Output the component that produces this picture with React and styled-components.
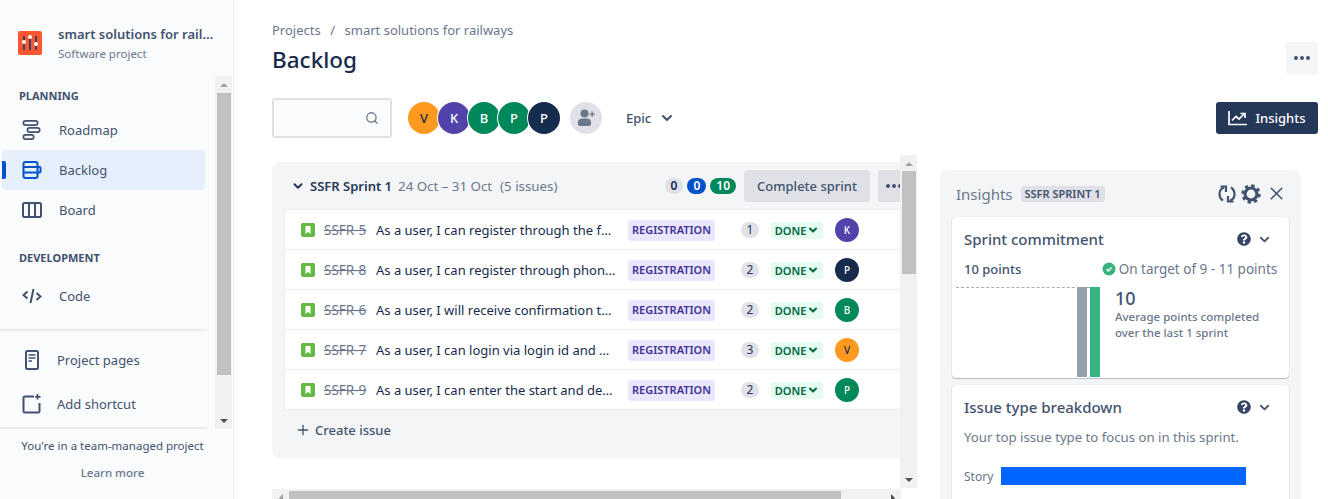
import React from 'react';
import styled, { createGlobalStyle } from 'styled-components';
import { FaQuestionCircle } from 'react-icons/fa';
import { FiChevronDown, FiSearch, FiX, FiPlus } from 'react-icons/fi';

const Global = createGlobalStyle`
  html, body { margin: 0; padding: 0; height: 499px; overflow: hidden; background: #fff; }
  body { font-family: "Noto Sans", sans-serif; color: #172B4D; font-size: 14px; }
  * { box-sizing: border-box; }
`;

const issues = [
  { key: 'SSFR-5', text: 'As a user, I can register through the form on the website', est: 1, who: 'K' },
  { key: 'SSFR-8', text: 'As a user, I can register through phone number and otp', est: 2, who: 'N' },
  { key: 'SSFR-6', text: 'As a user, I will receive confirmation through email', est: 2, who: 'B' },
  { key: 'SSFR-7', text: 'As a user, I can login via login id and password', est: 3, who: 'V' },
  { key: 'SSFR-9', text: 'As a user, I can enter the start and destination', est: 2, who: 'P' },
];

const people = {
  V: { label: 'V', bg: '#FF991F', fg: '#172B4D' },
  K: { label: 'K', bg: '#5243AA', fg: '#fff' },
  B: { label: 'B', bg: '#00875A', fg: '#fff' },
  P: { label: 'P', bg: '#00875A', fg: '#fff' },
  N: { label: 'P', bg: '#172B4D', fg: '#fff' },
};

export default function App() {
  return (
    <Page>
      <Global />
      <Sidebar>
        <ProjectHead>
          <ProjectLogo>
            <svg width="24" height="24" viewBox="0 0 24 24">
              <rect width="24" height="24" rx="2" fill="#FF5630" />
              <path d="M6 5v14M12 5v14M18 5v14" stroke="#344563" strokeWidth="2" />
              <circle cx="6" cy="11" r="2" fill="#fff" />
              <circle cx="12" cy="6" r="2" fill="#fff" />
              <circle cx="18" cy="13" r="2" fill="#fff" />
            </svg>
          </ProjectLogo>
          <ProjectText>
            <ProjectName>smart solutions for railways</ProjectName>
            <ProjectType>Software project</ProjectType>
          </ProjectText>
        </ProjectHead>
        <NavScroll>
          <NavContent>
            <NavLabel>PLANNING</NavLabel>
            <NavItem>
              <NavIcon><RoadmapIcon /></NavIcon>
              Roadmap
            </NavItem>
            <NavItem $active>
              <NavIcon><BacklogIcon /></NavIcon>
              Backlog
            </NavItem>
            <NavItem>
              <NavIcon><BoardIcon /></NavIcon>
              Board
            </NavItem>
            <NavLabel $second>DEVELOPMENT</NavLabel>
            <NavItem>
              <NavIcon><CodeIcon /></NavIcon>
              Code
            </NavItem>
            <NavDivider $gap={13} />
            <ExtraItem>
              <NavIcon><PageIcon /></NavIcon>
              Project pages
            </ExtraItem>
            <ExtraItem>
              <NavIcon><ShortcutIcon /></NavIcon>
              Add shortcut
            </ExtraItem>
            <NavDivider $gap={1} />
          </NavContent>
          <VScrollbar $thumbTop={0} $thumbHeight={282} />
        </NavScroll>
        <SideFoot>
          <FootNote>You're in a team-managed project</FootNote>
          <FootLink>Learn more</FootLink>
        </SideFoot>
      </Sidebar>

      <Main>
        <Crumbs>
          <span>Projects</span>
          <CrumbSep>/</CrumbSep>
          <span>smart solutions for railways</span>
        </Crumbs>
        <TitleRow>
          <PageTitle>Backlog</PageTitle>
          <MoreButton><Dots /></MoreButton>
        </TitleRow>
        <Toolbar>
          <SearchBox><FiSearch size={14} color="#6B778C" strokeWidth={2.2} /></SearchBox>
          <AvatarStack>
            {['V', 'K', 'B', 'P', 'N'].map((p) => (
              <StackAvatar key={p} $bg={people[p].bg} $fg={people[p].fg}>{people[p].label}</StackAvatar>
            ))}
          </AvatarStack>
          <AddPerson>
            <svg width="20" height="20" viewBox="0 0 20 20" fill="#6B778C">
              <circle cx="8.5" cy="5.5" r="4" />
              <path d="M2 14.500C2 11.500 4 10.500 6 10.500h5c2 0 4 1 4 4V16c0 1.200-.8 2-2 2H4c-1.200 0-2-.8-2-2z" />
              <path d="M15.5 3.500h1.300v2h2v1.300h-2v2h-1.300v-2h-2V5.500h2z" />
            </svg>
          </AddPerson>
          <EpicFilter>
            Epic
            <FiChevronDown size={16} strokeWidth={3} color="#42526E" />
          </EpicFilter>
          <InsightsButton>
            <svg width="20" height="16" viewBox="0 0 20 16" fill="none" stroke="#fff" strokeWidth="1.7">
              <path d="M1 1v13.500h18" />
              <path d="M4 10.500l4-4 3 2.500 5-5" />
              <path d="M12.5 3.500H17V8" />
            </svg>
            Insights
          </InsightsButton>
        </Toolbar>

        <Workspace>
          <BacklogPane>
            <BacklogRow>
              <BacklogScroll>
                <SprintCard>
                  <SprintHead>
                    <FiChevronDown size={14} strokeWidth={3.5} color="#253858" />
                    <SprintName>SSFR Sprint 1</SprintName>
                    <SprintMeta>24 Oct – 31 Oct</SprintMeta>
                    <SprintMeta $wide>(5 issues)</SprintMeta>
                    <Counts>
                      <Count $bg="#DFE1E6" $fg="#172B4D">0</Count>
                      <Count $bg="#0052CC" $fg="#fff">0</Count>
                      <Count $bg="#00875A" $fg="#fff">10</Count>
                    </Counts>
                    <CompleteButton>Complete sprint</CompleteButton>
                    <SprintMore><Dots /></SprintMore>
                  </SprintHead>
                  <IssueList>
                    {issues.map((i) => (
                      <IssueRow key={i.key}>
                        <StoryIcon />
                        <IssueKey>{i.key}</IssueKey>
                        <IssueText>{i.text}</IssueText>
                        <EpicTag>REGISTRATION</EpicTag>
                        <Estimate>{i.est}</Estimate>
                        <Status>
                          DONE
                          <FiChevronDown size={12} strokeWidth={4} color="#006644" />
                        </Status>
                        <RowAvatar $bg={people[i.who].bg} $fg={people[i.who].fg}>{people[i.who].label}</RowAvatar>
                      </IssueRow>
                    ))}
                  </IssueList>
                  <CreateIssue>
                    <FiPlus size={16} strokeWidth={2} color="#42526E" />
                    Create issue
                  </CreateIssue>
                </SprintCard>
              </BacklogScroll>
              <VScrollbar $thumbTop={-1} $thumbHeight={103} />
            </BacklogRow>
            <HScrollbar>
              <HArrow $dir="left" />
              <HThumb />
              <HArrow $dir="right" />
            </HScrollbar>
          </BacklogPane>

          <InsightsPanel>
            <PanelHead>
              <PanelTitle>Insights</PanelTitle>
              <SprintTag>SSFR SPRINT 1</SprintTag>
              <PanelTools>
                <RefreshIcon />
                <GearIcon />
                <FiX size={21} color="#42526E" strokeWidth={1.8} />
              </PanelTools>
            </PanelHead>
            <InsightCard>
              <CardHead>
                <CardTitle>Sprint commitment</CardTitle>
                <CardTools />
              </CardHead>
              <PointsRow>
                <Points>10 points</Points>
                <OnTarget>
                  <svg width="14" height="14" viewBox="0 0 14 14">
                    <circle cx="7" cy="7" r="6.5" fill="#36B37E" />
                    <path d="M4.500 7.200l1.800 1.700 3.200-3.400" fill="none" stroke="#fff" strokeWidth="1.5" />
                  </svg>
                  On target of 9 - 11 points
                </OnTarget>
              </PointsRow>
              <Chart>
                <Plot>
                  <Bar $color="#97A0AF" />
                  <Bar $color="#36B37E" />
                </Plot>
                <ChartNote>
                  <BigNumber>10</BigNumber>
                  <NoteText>Average points completed over the last 1 sprint</NoteText>
                </ChartNote>
              </Chart>
            </InsightCard>
            <InsightCard $second>
              <CardHead>
                <CardTitle>Issue type breakdown</CardTitle>
                <CardTools />
              </CardHead>
              <CardCopy>Your top issue type to focus on in this sprint.</CardCopy>
              <TypeRow>
                <TypeLabel>Story</TypeLabel>
                <TypeBar style={{ width: 245 }} />
              </TypeRow>
            </InsightCard>
          </InsightsPanel>
        </Workspace>
      </Main>
    </Page>
  );
}

const Dots = () => (
  <svg width="18" height="6" viewBox="0 0 18 6" fill="#42526E">
    <circle cx="3" cy="3" r="2" />
    <circle cx="9" cy="3" r="2" />
    <circle cx="15" cy="3" r="2" />
  </svg>
);

const CardTools = () => (
  <ToolGroup>
    <FaQuestionCircle size={14} color="#344563" />
    <FiChevronDown size={15} strokeWidth={3} color="#42526E" />
  </ToolGroup>
);

const RoadmapIcon = () => (
  <svg width="20" height="22" viewBox="0 0 20 22" fill="none" stroke="currentColor" strokeWidth="1.7">
    <rect x="1.4" y="1.9" width="14.2" height="4.3" rx="2.1" />
    <rect x="5.4" y="8.9" width="12.3" height="4.3" rx="2.1" />
    <rect x="1.4" y="15.900" width="10.300" height="4.300" rx="2.100" />
  </svg>
);

const BacklogIcon = () => (
  <svg width="20" height="20" viewBox="0 0 20 20" fill="none" stroke="currentColor" strokeWidth="2">
    <rect x="1.5" y="2" width="14" height="16" rx="2" />
    <path d="M1.500 7h14M1.500 12.500h14" />
    <path d="M15.500 7h2a1 1 0 0 1 1 1v3.500a1 1 0 0 1-1 1h-2" />
  </svg>
);

const BoardIcon = () => (
  <svg width="20" height="18" viewBox="0 0 20 18" fill="none" stroke="currentColor" strokeWidth="2">
    <rect x="1" y="2" width="18" height="14" rx="1.5" />
    <path d="M7 2v14M13 2v14" />
  </svg>
);

const CodeIcon = () => (
  <svg width="20" height="18" viewBox="0 0 20 18" fill="none" stroke="currentColor" strokeWidth="2">
    <path d="M5.500 4.500L1.500 8l4 3.500M14.500 6l4 3.500-4 3.500M11.500 2l-3 14" />
  </svg>
);

const PageIcon = () => (
  <svg width="14" height="20" viewBox="0 0 14 20" fill="none" stroke="currentColor" strokeWidth="2">
    <rect x="1" y="1" width="12" height="18" rx="1.5" />
    <path d="M3.500 5h7M3.500 8h7M3.500 11h3.500" strokeWidth="1.5" />
  </svg>
);

const ShortcutIcon = () => (
  <svg width="20" height="20" viewBox="0 0 20 20" fill="none" stroke="currentColor" strokeWidth="2">
    <path d="M12 2.500H3c-1 0-1.500.5-1.500 1.500v13c0 1 .5 1.500 1.500 1.500h13c1 0 1.500-.5 1.500-1.500V9" />
    <path d="M15.500 0v5.500M13 2.800h5.500" strokeWidth="1.7" />
  </svg>
);

const RefreshIcon = () => (
  <svg width="18" height="20" viewBox="0 0 18 20" fill="none" stroke="#42526E" strokeWidth="2.2">
    <path d="M5 16.500C2.800 15 1.500 12.700 1.500 10c0-3 1.500-5.500 4.500-6.500" />
    <path d="M2.500 2.500H8V8" />
    <path d="M13 3.500c2.200 1.500 3.500 3.800 3.500 6.500 0 3-1.500 5.500-4.500 6.500" />
    <path d="M15.500 17.500H10V12" />
  </svg>
);

const GearIcon = () => (
  <svg width="20" height="20" viewBox="0 0 20 20" fill="none" stroke="#42526E">
    <circle cx="10" cy="10" r="6" strokeWidth="3.2" />
    <circle cx="10" cy="10" r="8.300" strokeWidth="2.800" strokeDasharray="3.300 3.220" />
  </svg>
);

const StoryIcon = () => (
  <StoryBox>
    <svg width="14" height="14" viewBox="0 0 14 14">
      <rect width="14" height="14" rx="2" fill="#65BA43" />
      <path d="M4.500 3h5v8L7 8.800 4.500 11z" fill="#fff" />
    </svg>
  </StoryBox>
);

const Page = styled.div`
  display: flex;
  width: 1328px;
  height: 499px;
  overflow: hidden;
`;

const Sidebar = styled.aside`
  flex: 0 0 234px;
  min-width: 0;
  overflow: hidden;
  display: flex;
  flex-direction: column;
  background: #FAFBFC;
  border-right: 1px solid #EBECF0;
  color: #42526E;
`;

const ProjectHead = styled.div`
  height: 76px;
  display: flex;
  gap: 16px;
  padding: 24px 19px 0 18px;
`;

const ProjectLogo = styled.div`
  flex: none;
  height: 24px;
  margin-top: 7px;
`;

const ProjectText = styled.div`
  min-width: 0;
  flex: 1;
`;

const ProjectName = styled.div`
  font-size: 13px;
  font-weight: 600;
  line-height: 20px;
  white-space: nowrap;
  overflow: hidden;
  text-overflow: ellipsis;
  color: #42526E;
`;

const ProjectType = styled.div`
  font-size: 11.5px;
  line-height: 20px;
  color: #6B778C;
`;

const NavScroll = styled.div`
  display: flex;
  height: 353px;
`;

const NavContent = styled.div`
  width: 215px;
  padding-top: 12px;
`;

const NavLabel = styled.div`
  font-size: 11px;
  font-weight: 700;
  line-height: 16px;
  margin: ${(p) => (p.$second ? '20px 0 10px' : '0 0 6px')};
  padding-left: 19px;
  color: #42526E;
`;

const NavItem = styled.div`
  position: relative;
  height: 40px;
  width: 203px;
  margin-left: 2px;
  display: flex;
  align-items: center;
  gap: 17px;
  padding-left: 19px;
  font-size: 13px;
  border-radius: 4px;
  background: ${(p) => (p.$active ? '#E6F0FC' : 'transparent')};
  color: #42526E;

  svg { color: ${(p) => (p.$active ? '#0052CC' : '#42526E')}; }

  ${(p) => p.$active && `
    &::before {
      content: '';
      position: absolute;
      left: 0;
      top: 11px;
      width: 4px;
      height: 18px;
      border-radius: 0 2px 2px 0;
      background: #0052CC;
    }
  `}
`;

const ExtraItem = styled(NavItem)`
  height: 44px;
  width: 207px;
  margin-left: 0;
  padding-left: 21px;
  gap: 15px;
`;

const NavIcon = styled.span`
  flex: none;
  width: 21px;
  display: flex;
  justify-content: center;
`;

const NavDivider = styled.div`
  width: 207px;
  height: 2px;
  margin-top: ${(p) => p.$gap}px;
  margin-bottom: ${(p) => (p.$gap > 1 ? 7 : 0)}px;
  background: #EBECF0;
`;

const ScrollTrack = styled.div`
  flex: 0 0 17px;
  display: flex;
  flex-direction: column;
  align-items: center;
  background: #F1F1F1;
`;

const ScrollArrow = styled.div`
  flex: none;
  height: 17px;
  display: flex;
  align-items: center;
  justify-content: center;

  &::after {
    content: '';
    border-left: 4px solid transparent;
    border-right: 4px solid transparent;
    ${(p) => (p.$up ? 'border-bottom: 4px solid #A3A3A3;' : 'border-top: 4px solid #505050;')}
  }
`;

const ScrollThumb = styled.div`
  flex: none;
  width: 14px;
  height: ${(p) => p.$height}px;
  margin-top: ${(p) => p.$top}px;
  background: #C1C1C1;
`;

const ScrollSpace = styled.div`
  flex: 1;
`;

const VScrollbar = ({ $thumbTop, $thumbHeight }) => (
  <ScrollTrack>
    <ScrollArrow $up />
    <ScrollThumb $top={$thumbTop} $height={$thumbHeight} />
    <ScrollSpace />
    <ScrollArrow />
  </ScrollTrack>
);

const SideFoot = styled.div`
  flex: 1;
  text-align: center;
  padding: 7px 8px 0 0;
`;

const FootNote = styled.div`
  font-size: 11.5px;
  line-height: 20px;
  color: #42526E;
`;

const FootLink = styled.div`
  font-size: 11.5px;
  font-weight: 500;
  line-height: 20px;
  margin-top: 7px;
  color: #6B778C;
`;

const Main = styled.main`
  flex: 1;
  min-width: 0;
  padding: 20px 10px 0 38px;
`;

const Crumbs = styled.div`
  display: flex;
  height: 20px;
  align-items: center;
  font-size: 13px;
  color: #6B778C;
`;

const CrumbSep = styled.span`
  margin: 0 9.5px;
`;

const TitleRow = styled.div`
  display: flex;
  justify-content: space-between;
  align-items: center;
  height: 34px;
  margin-top: 2px;
`;

const PageTitle = styled.h1`
  margin: 2px 0 0;
  font-size: 22.5px;
  font-weight: 500;
  line-height: 32px;
  color: #172B4D;
`;

const MoreButton = styled.button`
  width: 32px;
  height: 32px;
  border: 0;
  padding: 0;
  border-radius: 3px;
  background: #F4F5F7;
  display: flex;
  align-items: center;
  justify-content: center;
  margin-bottom: 2px;
`;

const Toolbar = styled.div`
  display: flex;
  align-items: center;
  height: 40px;
  margin-top: 22px;
`;

const SearchBox = styled.div`
  width: 120px;
  height: 40px;
  border: 2px solid #DFE1E6;
  border-radius: 3px;
  background: #FAFBFC;
  display: flex;
  align-items: center;
  justify-content: flex-end;
  padding-right: 11px;
`;

const AvatarStack = styled.div`
  display: flex;
  margin-left: 16px;
`;

const StackAvatar = styled.div`
  width: 32px;
  height: 32px;
  border-radius: 50%;
  margin-right: -2px;
  background: ${(p) => p.$bg};
  color: ${(p) => p.$fg};
  font-size: 13px;
  font-weight: 500;
  display: flex;
  align-items: center;
  justify-content: center;
  box-shadow: 0 0 0 1px #fff;
`;

const AddPerson = styled.div`
  width: 32px;
  height: 32px;
  margin-left: 12px;
  border-radius: 50%;
  background: #DFE1E6;
  display: flex;
  align-items: center;
  justify-content: center;
`;

const EpicFilter = styled.div`
  display: flex;
  align-items: center;
  gap: 8px;
  margin-left: 24px;
  font-size: 13px;
  font-weight: 500;
  color: #42526E;
`;

const InsightsButton = styled.button`
  margin-left: auto;
  width: 102px;
  height: 32px;
  border: 0;
  border-radius: 3px;
  background: #253858;
  color: #fff;
  display: flex;
  align-items: center;
  justify-content: center;
  gap: 7px;
  font: 500 13px "Noto Sans", sans-serif;
`;

const Workspace = styled.div`
  display: flex;
  align-items: flex-start;
  gap: 23px;
  margin-top: 17px;
`;

const BacklogPane = styled.div`
  flex: 0 0 645px;
  min-width: 0;
  display: flex;
  flex-direction: column;
`;

const BacklogRow = styled.div`
  display: flex;
  height: 333px;
`;

const BacklogScroll = styled.div`
  flex: 1;
  min-width: 0;
  overflow: hidden;
  padding-top: 7px;
`;

const SprintCard = styled.section`
  width: 650px;
  height: 296px;
  background: #F4F5F7;
  border-radius: 8px;
  padding: 0 12px;
`;

const SprintHead = styled.div`
  display: flex;
  align-items: center;
  height: 47px;
  padding: 1px 0 0 7px;
`;

const SprintName = styled.span`
  margin-left: 5px;
  font-size: 13px;
  font-weight: 600;
  color: #253858;
`;

const SprintMeta = styled.span`
  margin-left: ${(p) => (p.$wide ? 8 : 6)}px;
  font-size: 13.3px;
  color: #6B778C;
`;

const Counts = styled.div`
  display: flex;
  gap: 4px;
  margin-left: auto;
`;

const Count = styled.span`
  min-width: 18px;
  height: 16px;
  padding: 0 6px;
  border-radius: 8px;
  background: ${(p) => p.$bg};
  color: ${(p) => p.$fg};
  font-size: 12px;
  font-weight: 600;
  line-height: 16px;
  text-align: center;
`;

const CompleteButton = styled.button`
  width: 126px;
  height: 32px;
  margin-left: 8px;
  border: 0;
  padding: 0;
  border-radius: 3px;
  background: #DFE1E6;
  color: #42526E;
  font: 500 13px "Noto Sans", sans-serif;
`;

const SprintMore = styled(MoreButton)`
  flex: none;
  margin: 0 0 0 8px;
  background: #DFE1E6;
`;

const IssueList = styled.div`
  border: 1px solid #EBECF0;
  border-bottom: 0;
  background: #fff;
`;

const IssueRow = styled.div`
  display: flex;
  align-items: center;
  height: 40px;
  padding: 1px 0 0 16px;
  border-bottom: 1px solid #EBECF0;
  font-size: 13px;
`;

const StoryBox = styled.span`
  flex: none;
  height: 14px;
  display: flex;
`;

const IssueKey = styled.span`
  flex: none;
  width: 52px;
  margin-left: 9px;
  font-size: 13.5px;
  color: #6B778C;
  text-decoration: line-through;
`;

const IssueText = styled.span`
  flex: none;
  width: 240px;
  margin-right: 12px;
  color: #172B4D;
  white-space: nowrap;
  overflow: hidden;
  text-overflow: ellipsis;
`;

const EpicTag = styled.span`
  flex: none;
  width: 87px;
  height: 21px;
  border-radius: 3px;
  background: #EAE6FF;
  color: #403294;
  font-size: 11px;
  font-weight: 600;
  line-height: 20px;
  text-align: center;
`;

const Estimate = styled.span`
  flex: none;
  width: 18px;
  height: 16px;
  margin-left: 26px;
  border-radius: 8px;
  background: #DFE1E6;
  color: #253858;
  font-size: 12px;
  line-height: 16px;
  text-align: center;
`;

const Status = styled.span`
  flex: none;
  width: 52px;
  height: 17px;
  margin-left: 12px;
  border-radius: 3px;
  background: #E3FCEF;
  color: #006644;
  font-size: 11px;
  font-weight: 600;
  display: flex;
  align-items: center;
  justify-content: center;
  gap: 1px;
`;

const RowAvatar = styled.span`
  flex: none;
  width: 24px;
  height: 24px;
  margin-left: 12px;
  border-radius: 50%;
  background: ${(p) => p.$bg};
  color: ${(p) => p.$fg};
  font-size: 10px;
  font-weight: 500;
  display: flex;
  align-items: center;
  justify-content: center;
`;

const CreateIssue = styled.div`
  display: flex;
  align-items: center;
  gap: 4px;
  height: 38px;
  padding: 2px 0 0 11px;
  font-size: 13px;
  font-weight: 500;
  color: #42526E;
`;

const HScrollbar = styled.div`
  display: flex;
  align-items: center;
  width: 629px;
  height: 17px;
  margin-top: 1px;
  background: #F1F1F1;
`;

const HArrow = styled.div`
  flex: none;
  width: 17px;
  height: 17px;
  display: flex;
  align-items: center;
  justify-content: center;

  &::after {
    content: '';
    border-top: 4px solid transparent;
    border-bottom: 4px solid transparent;
    ${(p) => (p.$dir === 'left' ? 'border-right: 4px solid #A3A3A3;' : 'border-left: 4px solid #505050;')}
  }
`;

const HThumb = styled.div`
  flex: none;
  width: 552px;
  height: 14px;
  margin-right: auto;
  background: #C1C1C1;
`;

const InsightsPanel = styled.aside`
  flex: 0 0 361px;
  margin-top: 15px;
  height: 400px;
  background: #F4F5F7;
  border-radius: 8px;
  padding: 0 12px;
`;

const PanelHead = styled.div`
  display: flex;
  align-items: center;
  height: 47px;
  padding-left: 4px;
`;

const PanelTitle = styled.span`
  font-size: 15px;
  color: #6B778C;
`;

const SprintTag = styled.span`
  height: 16px;
  margin-left: 8px;
  padding: 0 4px;
  border-radius: 3px;
  background: #DFE1E6;
  color: #42526E;
  font-size: 11px;
  font-weight: 600;
  line-height: 16px;
`;

const PanelTools = styled.div`
  display: flex;
  align-items: center;
  gap: 5px;
  margin-left: auto;
  padding-right: 2px;
`;

const InsightCard = styled.section`
  height: ${(p) => (p.$second ? 200 : 161)}px;
  margin-top: ${(p) => (p.$second ? 7 : 0)}px;
  padding: 12px 12px 0;
  background: #fff;
  border-radius: 4px;
  box-shadow: 0 1px 1px rgba(9, 30, 66, 0.25), 0 0 1px rgba(9, 30, 66, 0.2);
`;

const CardHead = styled.div`
  display: flex;
  align-items: center;
  justify-content: space-between;
  height: 20px;
`;

const CardTitle = styled.h3`
  margin: 0;
  font-size: 15px;
  font-weight: 500;
  color: #42526E;
`;

const ToolGroup = styled.div`
  display: flex;
  align-items: center;
  gap: 6px;
  padding-right: 5px;
`;

const PointsRow = styled.div`
  display: flex;
  align-items: center;
  justify-content: space-between;
  height: 20px;
  margin-top: 10px;
`;

const Points = styled.span`
  font-size: 13px;
  font-weight: 500;
  color: #42526E;
`;

const OnTarget = styled.span`
  display: flex;
  align-items: center;
  gap: 3px;
  font-size: 13.5px;
  color: #6B778C;
`;

const Chart = styled.div`
  display: flex;
  height: 90px;
  margin: 8px 0 0 -8px;
`;

const Plot = styled.div`
  flex: none;
  width: 144px;
  border-top: 1px dashed #A5ADBA;
  display: flex;
  justify-content: flex-end;
  gap: 3px;
`;

const Bar = styled.div`
  width: 10px;
  margin-top: -1px;
  background: ${(p) => p.$color};
`;

const ChartNote = styled.div`
  width: 155px;
  margin-left: 15px;
`;

const BigNumber = styled.div`
  font-size: 18px;
  font-weight: 500;
  line-height: 22px;
  color: #42526E;
`;

const NoteText = styled.div`
  font-size: 11.5px;
  font-weight: 500;
  line-height: 16px;
  color: #6B778C;
`;

const CardCopy = styled.div`
  margin-top: 10px;
  font-size: 13.2px;
  line-height: 20px;
  color: #6B778C;
`;

const TypeRow = styled.div`
  display: flex;
  align-items: center;
  gap: 8px;
  margin-top: 20px;
`;

const TypeLabel = styled.span`
  font-size: 12px;
  color: #6B778C;
`;

const TypeBar = styled.div`
  height: 18px;
  margin-left: auto;
  margin-right: 31px;
  background: #0065FF;
`;
